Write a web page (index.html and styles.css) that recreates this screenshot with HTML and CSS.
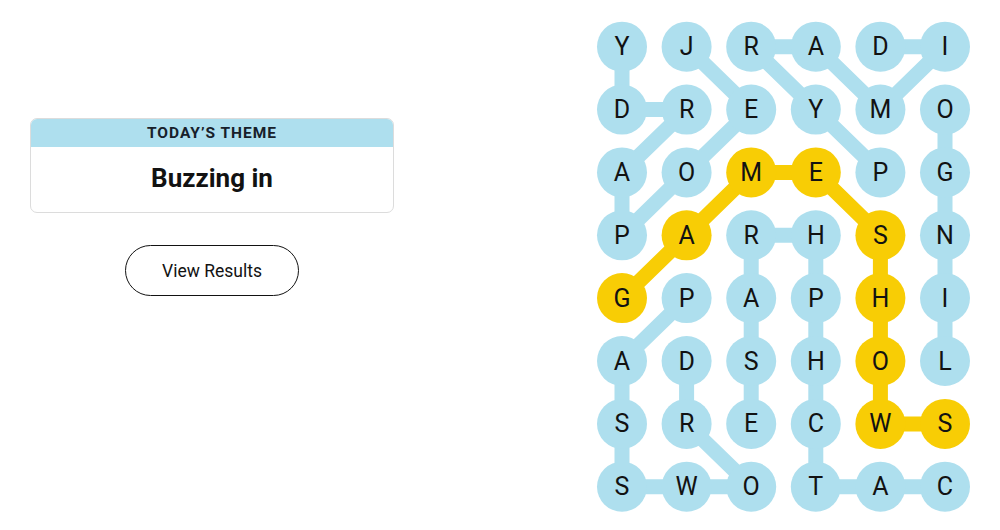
FILE: index.html
```html
<!DOCTYPE html>
<html>
<head>
<meta charset="utf-8">
<link rel="stylesheet" href="styles.css">
</head>
<body>
<div class="page">
  <section class="side">
    <div class="theme-card">
      <div class="theme-head">TODAY’S THEME</div>
      <div class="theme-body">Buzzing in</div>
    </div>
    <button class="results-btn">View Results</button>
  </section>
  <section class="board">
    <svg class="grid" width="400" height="530" viewBox="0 0 400 530">
      <g class="links">
        <polyline points="96.6,46.7 161.2,109.6 96.6,172.4 32,235.3 32,172.4 96.6,109.6 32,109.6 32,46.7"/>
        <polyline points="290.4,172.4 225.8,109.6 161.2,46.7 225.8,46.7 290.4,109.6 355,46.7 290.4,46.7"/>
        <polyline points="355,361 355,298.1 355,235.3 355,172.4 355,109.6"/>
        <polyline points="96.6,298.1 32,361 32,423.9 32,486.7 96.6,486.7 161.2,486.7 96.6,423.9 96.6,361"/>
        <polyline points="355,486.7 290.4,486.7 225.8,486.7 225.8,423.9 225.8,361 225.8,298.1 225.8,235.3 161.2,235.3 161.2,298.1 161.2,361 161.2,423.9"/>
      </g>
      <g class="links spangram">
        <polyline points="32,298.1 96.6,235.3 161.2,172.4 225.8,172.4 290.4,235.3 290.4,298.1 290.4,361 290.4,423.9 355,423.9"/>
      </g>
      <g class="cells">
        <g class="cell" transform="translate(32,46.7)"><circle r="25"/><text>Y</text></g>
        <g class="cell" transform="translate(96.6,46.7)"><circle r="25"/><text>J</text></g>
        <g class="cell" transform="translate(161.2,46.7)"><circle r="25"/><text>R</text></g>
        <g class="cell" transform="translate(225.8,46.7)"><circle r="25"/><text>A</text></g>
        <g class="cell" transform="translate(290.4,46.7)"><circle r="25"/><text>D</text></g>
        <g class="cell" transform="translate(355,46.7)"><circle r="25"/><text>I</text></g>

        <g class="cell" transform="translate(32,109.6)"><circle r="25"/><text>D</text></g>
        <g class="cell" transform="translate(96.6,109.6)"><circle r="25"/><text>R</text></g>
        <g class="cell" transform="translate(161.2,109.6)"><circle r="25"/><text>E</text></g>
        <g class="cell" transform="translate(225.8,109.6)"><circle r="25"/><text>Y</text></g>
        <g class="cell" transform="translate(290.4,109.6)"><circle r="25"/><text>M</text></g>
        <g class="cell" transform="translate(355,109.6)"><circle r="25"/><text>O</text></g>

        <g class="cell" transform="translate(32,172.4)"><circle r="25"/><text>A</text></g>
        <g class="cell" transform="translate(96.6,172.4)"><circle r="25"/><text>O</text></g>
        <g class="cell found" transform="translate(161.2,172.4)"><circle r="25"/><text>M</text></g>
        <g class="cell found" transform="translate(225.8,172.4)"><circle r="25"/><text>E</text></g>
        <g class="cell" transform="translate(290.4,172.4)"><circle r="25"/><text>P</text></g>
        <g class="cell" transform="translate(355,172.4)"><circle r="25"/><text>G</text></g>

        <g class="cell" transform="translate(32,235.3)"><circle r="25"/><text>P</text></g>
        <g class="cell found" transform="translate(96.6,235.3)"><circle r="25"/><text>A</text></g>
        <g class="cell" transform="translate(161.2,235.3)"><circle r="25"/><text>R</text></g>
        <g class="cell" transform="translate(225.8,235.3)"><circle r="25"/><text>H</text></g>
        <g class="cell found" transform="translate(290.4,235.3)"><circle r="25"/><text>S</text></g>
        <g class="cell" transform="translate(355,235.3)"><circle r="25"/><text>N</text></g>

        <g class="cell found" transform="translate(32,298.1)"><circle r="25"/><text>G</text></g>
        <g class="cell" transform="translate(96.6,298.1)"><circle r="25"/><text>P</text></g>
        <g class="cell" transform="translate(161.2,298.1)"><circle r="25"/><text>A</text></g>
        <g class="cell" transform="translate(225.8,298.1)"><circle r="25"/><text>P</text></g>
        <g class="cell found" transform="translate(290.4,298.1)"><circle r="25"/><text>H</text></g>
        <g class="cell" transform="translate(355,298.1)"><circle r="25"/><text>I</text></g>

        <g class="cell" transform="translate(32,361)"><circle r="25"/><text>A</text></g>
        <g class="cell" transform="translate(96.6,361)"><circle r="25"/><text>D</text></g>
        <g class="cell" transform="translate(161.2,361)"><circle r="25"/><text>S</text></g>
        <g class="cell" transform="translate(225.8,361)"><circle r="25"/><text>H</text></g>
        <g class="cell found" transform="translate(290.4,361)"><circle r="25"/><text>O</text></g>
        <g class="cell" transform="translate(355,361)"><circle r="25"/><text>L</text></g>

        <g class="cell" transform="translate(32,423.9)"><circle r="25"/><text>S</text></g>
        <g class="cell" transform="translate(96.6,423.9)"><circle r="25"/><text>R</text></g>
        <g class="cell" transform="translate(161.2,423.9)"><circle r="25"/><text>E</text></g>
        <g class="cell" transform="translate(225.8,423.9)"><circle r="25"/><text>C</text></g>
        <g class="cell found" transform="translate(290.4,423.9)"><circle r="25"/><text>W</text></g>
        <g class="cell found" transform="translate(355,423.9)"><circle r="25"/><text>S</text></g>

        <g class="cell" transform="translate(32,486.7)"><circle r="25"/><text>S</text></g>
        <g class="cell" transform="translate(96.6,486.7)"><circle r="25"/><text>W</text></g>
        <g class="cell" transform="translate(161.2,486.7)"><circle r="25"/><text>O</text></g>
        <g class="cell" transform="translate(225.8,486.7)"><circle r="25"/><text>T</text></g>
        <g class="cell" transform="translate(290.4,486.7)"><circle r="25"/><text>A</text></g>
        <g class="cell" transform="translate(355,486.7)"><circle r="25"/><text>C</text></g>
      </g>
    </svg>
  </section>
</div>
</body>
</html>
```

FILE: styles.css
```css
html, body {
  margin: 0;
  padding: 0;
  background: #ffffff;
}

body {
  font-family: Roboto, "Liberation Sans", Arial, sans-serif;
  color: #121212;
}

.page {
  display: flex;
  width: 1000px;
  height: 530px;
  overflow: hidden;
}

.side {
  width: 364px;
  margin-left: 30px;
  padding-top: 118px;
  display: flex;
  flex-direction: column;
  align-items: center;
}

.theme-card {
  width: 364px;
  box-sizing: border-box;
  border: 1px solid #dcdcdc;
  border-radius: 7px;
  overflow: hidden;
  background: #fff;
}

.theme-head {
  background: #aedfee;
  height: 28px;
  display: flex;
  align-items: center;
  justify-content: center;
  font-size: 15.5px;
  font-weight: 700;
  letter-spacing: 1px;
  color: #17202a;
}

.theme-body {
  height: 65px;
  padding-bottom: 3px;
  box-sizing: border-box;
  display: flex;
  align-items: center;
  justify-content: center;
  font-size: 26px;
  font-weight: 700;
  color: #121212;
}

.results-btn {
  margin-top: 32px;
  width: 174px;
  height: 51px;
  border: 1px solid #121212;
  border-radius: 26px;
  background: #fff;
  font-family: Roboto, "Liberation Sans", Arial, sans-serif;
  font-size: 17.5px;
  color: #121212;
  padding: 0;
}

.board {
  margin-left: 196px;
}

.grid {
  display: block;
}

.links polyline {
  fill: none;
  stroke: #aedfee;
  stroke-width: 15;
  stroke-linecap: round;
  stroke-linejoin: round;
}

.links.spangram polyline {
  stroke: #f8cd05;
}

.cell circle {
  fill: #aedfee;
}

.cell.found circle {
  fill: #f8cd05;
}

.cell text {
  font-family: Roboto, "Liberation Sans", Arial, sans-serif;
  font-size: 25px;
  fill: #121212;
  text-anchor: middle;
  dominant-baseline: central;
}
```
